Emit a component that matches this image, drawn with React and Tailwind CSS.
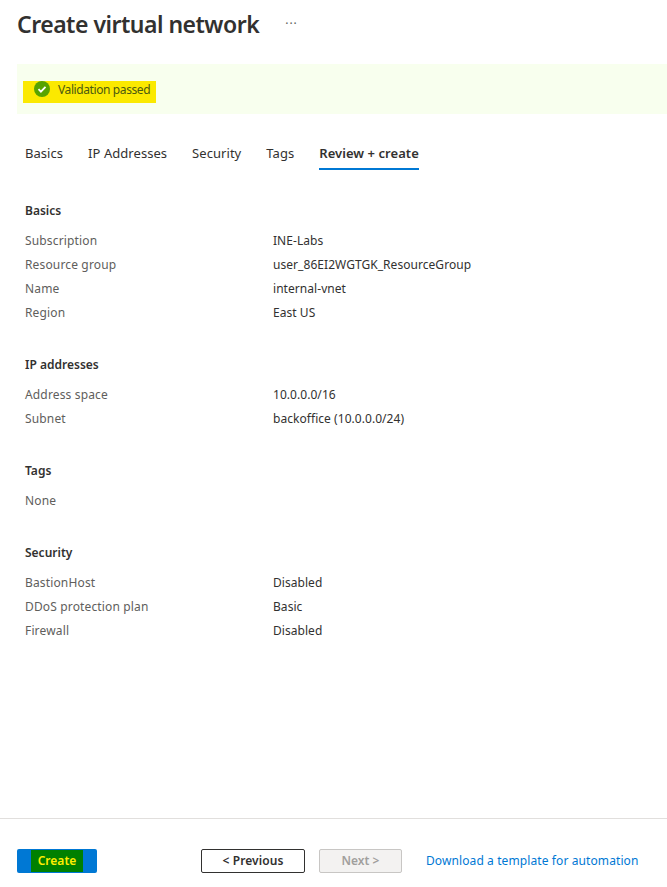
const sections = [
  {
    title: "Basics",
    rows: [
      ["Subscription", "INE-Labs"],
      ["Resource group", "user_86EI2WGTGK_ResourceGroup"],
      ["Name", "internal-vnet"],
      ["Region", "East US"],
    ],
  },
  {
    title: "IP addresses",
    rows: [
      ["Address space", "10.0.0.0/16"],
      ["Subnet", "backoffice (10.0.0.0/24)"],
    ],
  },
  { title: "Tags", rows: [["None", ""]] },
  {
    title: "Security",
    rows: [
      ["BastionHost", "Disabled"],
      ["DDoS protection plan", "Basic"],
      ["Firewall", "Disabled"],
    ],
  },
];

const tabs = ["Basics", "IP Addresses", "Security", "Tags", "Review + create"];

export default function App() {
  return (
    <div className="w-[667px] h-[887px] bg-white flex flex-col font-['Noto_Sans',sans-serif] text-[#323130] text-[12px]">
      <div className="flex items-center h-[48px] pl-[17px] gap-[26px]">
        <h1 className="text-[23px] font-semibold tracking-[-0.5px]">Create virtual network</h1>
        <span className="text-[12px] text-[#605e5c] tracking-[1px]">···</span>
      </div>
      <div className="mt-[16px] ml-[17px] h-[50px] bg-[#f8ffee] flex items-start pt-[17px]">
        <div className="ml-[6px] w-[133px] h-[22px] bg-[#fbe900] flex items-start gap-[8px] pl-[11px]">
          <svg width="16" height="16" viewBox="0 0 16 16">
            <circle cx="8" cy="8" r="8" fill="#57a300" />
            <path d="M4.5 8.2l2.4 2.4 4.6-4.8" stroke="#fff" strokeWidth="1.8" fill="none" />
          </svg>
          <span className="text-[#4b5a10] tracking-[-0.4px] leading-[18px]">Validation passed</span>
        </div>
      </div>
      <div className="flex gap-[25px] pl-[25px] mt-[20px] text-[13px] tracking-[0.05px]">
        {tabs.map((t, i) => (
          <div key={t} className={i === 4 ? "font-semibold border-b-2 border-[#0078d4] h-[36px] pt-[10px]" : "h-[36px] pt-[10px]"}>{t}</div>
        ))}
      </div>
      <div className="pl-[25px] mt-[29px] flex-1">
        {sections.map((s) => (
          <div key={s.title} className="mb-[28px]">
            <div className="font-semibold h-[24px] flex items-center mb-[6px]">{s.title}</div>
            {s.rows.map(([k, v]) => (
              <div key={k} className="flex h-[24px] items-center">
                <div className="w-[248px] text-[#605e5c] tracking-[0.15px]">{k}</div>
                <div className="tracking-[0.05px]">{v}</div>
              </div>
            ))}
          </div>
        ))}
      </div>
      <div className="border-t border-[#e1dfdd] h-[69px] flex items-start pt-[30px] pl-[17px]">
        <button className="w-[80px] h-[24px] bg-[#0078d4] rounded-[2px] flex items-center justify-center">
          <span className="bg-[#008000] text-[#ffee00] font-semibold w-[52px] h-[22px] flex items-center justify-center">Create</span>
        </button>
        <button className="ml-[104px] w-[104px] h-[24px] border border-[#323130] rounded-[2px] font-semibold tracking-[0.1px]">&lt; Previous</button>
        <button className="ml-[14px] w-[83px] h-[24px] border border-[#c8c6c4] bg-[#f3f2f1] text-[#a19f9d] rounded-[2px] font-semibold">Next &gt;</button>
        <a className="ml-[24px] h-[24px] flex items-center text-[#0078d4] tracking-[0.1px]">Download a template for automation</a>
      </div>
    </div>
  );
}
